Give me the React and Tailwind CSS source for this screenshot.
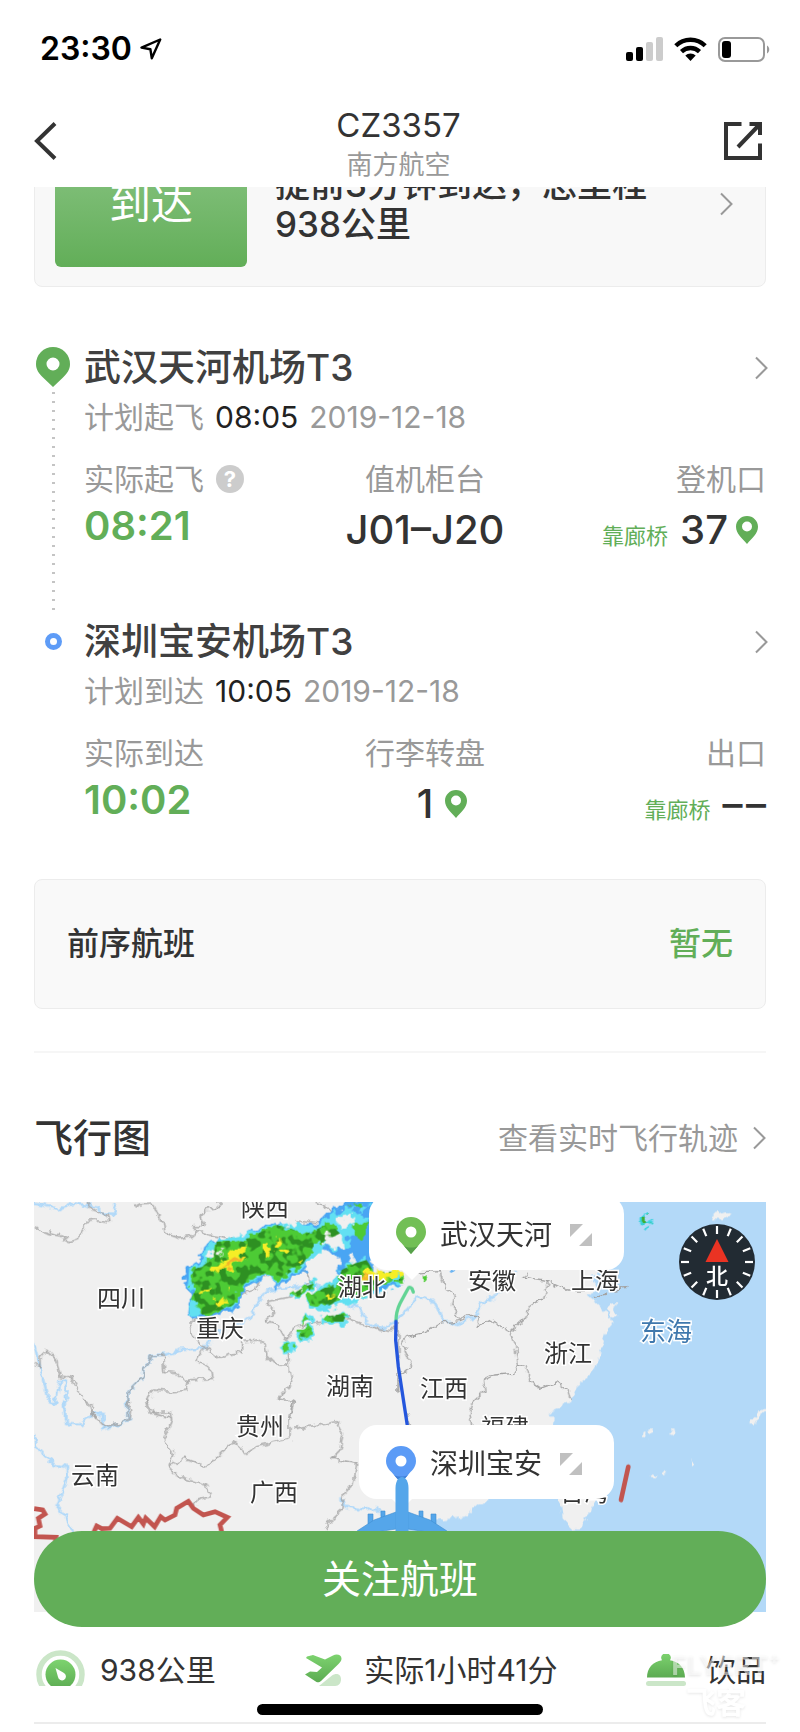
/**
 * Flight detail screen: status, departure / arrival timeline, flight map
 */

const FLIGHT = {
  number: 'CZ3357',
  airline: '南方航空',
  departure: {
    airport: '武汉天河机场T3',
    planLabel: '计划起飞',
    planTime: '08:05',
    date: '2019-12-18',
    actualLabel: '实际起飞',
    actualTime: '08:21',
    hasHelp: true,
    middleLabel: '值机柜台',
    middleValue: 'J01–J20',
    endLabel: '登机口',
    endValue: '37',
    endHasPin: true,
  },
  arrival: {
    airport: '深圳宝安机场T3',
    planLabel: '计划到达',
    planTime: '10:05',
    date: '2019-12-18',
    actualLabel: '实际到达',
    actualTime: '10:02',
    middleLabel: '行李转盘',
    middleValue: '1',
    middleHasPin: true,
    endLabel: '出口',
    endValue: '–\u200a–',
  },
};

const MAP_LABELS = [
  { name: '陕西', x: 231, y: 14 },
  { name: '四川', x: 87, y: 105 },
  { name: '重庆', x: 186, y: 135 },
  { name: '湖北', x: 328, y: 94 },
  { name: '湖南', x: 316, y: 193 },
  { name: '安徽', x: 458, y: 87 },
  { name: '上海', x: 561, y: 87 },
  { name: '浙江', x: 534, y: 160 },
  { name: '江西', x: 410, y: 195 },
  { name: '福建', x: 471, y: 234 },
  { name: '贵州', x: 226, y: 233 },
  { name: '云南', x: 61, y: 282 },
  { name: '广西', x: 240, y: 299 },
  { name: '台湾', x: 550, y: 299 },
];

const TICKS = Array.from({ length: 16 }, (_, i) => i * 22.5);

function Chevron({ className = 'text-[#999]' }) {
  return (
    <svg className={className} width="13" height="24" viewBox="0 0 13 24" fill="none" stroke="currentColor" strokeWidth="2">
      <path d="M1 1.500 11.500 12 1 22.500" />
    </svg>
  );
}

function SmallPin() {
  return (
    <svg width="22" height="28" viewBox="0 0 22 28" aria-hidden="true">
      <path
        fill="#62ae58"
        fillRule="evenodd"
        d="M11 0C4.900 0 0 4.800 0 10.700 0 17.500 6 22 11 28c5-6 11-10.500 11-17.300C22 4.800 17.100 0 11 0Zm0 5.500a5 5 0 1 1 0 10 5 5 0 0 1 0-10Z"
      />
    </svg>
  );
}

function StatusBar() {
  return (
    <div className="flex h-[98px] items-center justify-between pr-[30px] pl-10 text-black">
      <div className="flex items-center gap-2">
        <span className="text-[32px] leading-10 font-semibold">23:30</span>
        <svg width="22" height="22" viewBox="0 0 22 22" fill="none" stroke="currentColor" strokeWidth="2.400" strokeLinejoin="round">
          <path d="M20.200 1.500 1.500 9.600l8.900 1.700 1.400 8.900Z" />
        </svg>
      </div>
      <div className="flex items-center gap-[11px]">
        <svg width="37" height="24" viewBox="0 0 37 24">
          <rect x="0" y="15" width="7" height="9" rx="2" />
          <rect x="10" y="10" width="7" height="14" rx="2" />
          <rect x="20" y="5" width="7" height="19" rx="2" fill="#ccc" />
          <rect x="30" y="0" width="7" height="24" rx="2" fill="#ccc" />
        </svg>
        <svg width="33" height="24" viewBox="0 0 33 24" fill="none" stroke="currentColor" strokeWidth="4.400">
          <path d="M1.800 8.800a21 21 0 0 1 29.400 0" />
          <path d="M7.500 14.600a13 13 0 0 1 18 0" />
          <path d="M16.500 24 11.300 18.600a7.600 7.600 0 0 1 10.400 0Z" fill="currentColor" stroke="none" />
        </svg>
        <svg width="52" height="25" viewBox="0 0 52 25">
          <rect x="1" y="1" width="45" height="23" rx="6" fill="none" stroke="#999" strokeWidth="2" />
          <rect x="4" y="4" width="9" height="17" rx="3" />
          <path d="M49 8.500c3 1.500 3 6.500 0 8Z" fill="#999" />
        </svg>
      </div>
    </div>
  );
}

function Header() {
  return (
    <header className="sticky top-0 z-20 bg-white">
      <StatusBar />
      <div className="flex h-[89px] items-center justify-between pr-[37px] pb-1 pl-[34px] text-[#333]">
        <button type="button" aria-label="返回" className="flex w-10">
          <svg width="23" height="38" viewBox="0 0 23 38" fill="none" stroke="currentColor" strokeWidth="4">
            <path d="M21 1.500 3 19l18 17.500" />
          </svg>
        </button>
        <div className="pt-2 text-center">
          <h1 className="text-[33px] leading-10">{FLIGHT.number}</h1>
          <p className="text-[26px] leading-10 text-[#999]">{FLIGHT.airline}</p>
        </div>
        <button type="button" aria-label="分享" className="flex w-10 justify-end">
          <svg width="40" height="40" viewBox="0 0 40 40" fill="none" stroke="currentColor" strokeWidth="4">
            <path d="M18.500 3H3v34h34V22.500" />
            <path d="M26.500 3H37v11M37 3 15 26" />
          </svg>
        </button>
      </div>
    </header>
  );
}

function StatusCard() {
  return (
    <button
      type="button"
      className="-mt-[67px] flex w-full items-center rounded-lg border border-[#ececec] bg-[#f8f8f8] py-[19px] pr-8 pl-5 text-left"
    >
      <span className="flex h-[127px] w-48 items-center justify-center rounded-md bg-linear-to-b from-[#8bc585] to-[#62ae58] text-[42px] leading-[48px] text-white">
        到达
      </span>
      <span className="ml-7 w-[390px] text-[35px] leading-10 font-medium text-[#333]">提前3分钟到达，总里程938公里</span>
      <Chevron className="ml-auto text-[#999]" />
    </button>
  );
}

function AirportStop({ stop, first }) {
  return (
    <section className="flex">
      <div className="flex w-[50px] flex-col items-start pt-1">
        {first ? (
          <>
            <svg className="ml-0.5" width="34" height="40" viewBox="0 0 34 40">
              <path
                fill="#62ae58"
                fillRule="evenodd"
                d="M17 0a17 17 0 0 0-17 17c0 6 3 9.500 7 13.500L17 40l10-9.500c4-4 7-7.500 7-13.500A17 17 0 0 0 17 0Zm0 10.500a6.500 6.500 0 1 1 0 13 6.500 6.500 0 0 1 0-13Z"
              />
            </svg>
            <span className="mt-[5px] ml-[18px] w-[3px] flex-1 bg-[repeating-linear-gradient(#c4c4c4_0_2px,transparent_2px_9px)]" />
          </>
        ) : (
          <span className="mt-3 ml-[11px] size-[17px] rounded-full border-[5px] border-[#5e9cf7]" />
        )}
      </div>
      <div className={first ? 'flex-1 pb-[60px]' : 'flex-1'}>
        <a href="#airport" className="-mr-0.5 flex items-center justify-between">
          <h2 className="text-[37px] leading-[50px] font-medium text-[#404040]">{stop.airport}</h2>
          <Chevron />
        </a>
        <p className="mt-1 flex gap-[11px] text-[30px] leading-10 text-[#999]">
          {stop.planLabel}
          <span className="text-[#222]">{stop.planTime}</span>
          <span>{stop.date}</span>
        </p>
        <dl className="mt-[22px] grid grid-cols-3 text-[#333]">
          <div>
            <dt className="flex items-center gap-3 text-[30px] leading-10 text-[#999]">
              {stop.actualLabel}
              {stop.hasHelp && (
                <button
                  type="button"
                  aria-label="说明"
                  className="flex size-7 items-center justify-center rounded-full bg-[#ccc] text-[22px] font-bold text-white"
                >
                  ?
                </button>
              )}
            </dt>
            <dd className="mt-1 text-[40px] leading-[46px] font-semibold text-[#62ae58]">{stop.actualTime}</dd>
          </div>
          <div className="text-center">
            <dt className="text-[30px] leading-10 text-[#999]">{stop.middleLabel}</dt>
            <dd
              className={`mt-1 flex items-center justify-center gap-3 text-[40px] leading-[54px] font-medium ${stop.middleHasPin ? 'pl-[34px]' : ''}`}
            >
              {stop.middleValue}
              {stop.middleHasPin && <SmallPin />}
            </dd>
          </div>
          <div className="text-right">
            <dt className="text-[30px] leading-10 text-[#999]">{stop.endLabel}</dt>
            <dd className="mt-1 flex items-center justify-end gap-2 text-[40px] leading-[54px] font-medium">
              <span className="flex items-baseline gap-3">
                <span className="text-[22px] leading-6 font-normal text-[#62ae58]">靠廊桥</span>
                {stop.endValue}
              </span>
              {stop.endHasPin && (
                <span className="flex pr-2">
                  <SmallPin />
                </span>
              )}
            </dd>
          </div>
        </dl>
      </div>
    </section>
  );
}

function Borders() {
  return (
    <g fill="none" stroke="#a3a3a3" strokeWidth="4" strokeLinejoin="round" filter="url(#jagged)">
      <g transform="translate(-12 -6)">
        <path d="M12 80 25 92 60 100 90 108 120 122 150 112 165 85 165 65 200 60 240 66 235 45 190 30 170 6" />
        <path d="M310 8 330 18 370 15 385 50 400 60 405 100 450 115 480 110 500 92 540 105 610 118M500 92 490 80 525 80 510 50 525 28 565 22 568 6" />
        <path d="M860 6 900 30 920 80 800 62" />
        <path d="M12 490 30 500 30 470 50 450 80 480 90 530 125 535 150 580 180 625 200 660" />
        <path d="M510 345 480 370 485 400 520 440 545 455 570 475 600 460 635 455 635 425 680 420 705 430 710 465 740 495 775 495 785 550 745 595 790 600 780 660" />
        <path d="M520 445 500 480 545 510 550 535 475 540 470 570 430 575 370 570 350 600 370 640 425 655M400 465 405 515 440 518 475 545" />
        <path d="M295 660 295 575 340 530 340 505 360 490 365 465 405 465" />
        <path d="M510 345 640 280 680 265 690 225 820 212 840 235 830 265" />
        <path d="M785 290 710 305 735 335 710 360 740 375 760 410 775 420 790 385 840 370 900 365 950 355 990 370 1040 385 1080 392 1100 370M770 420 775 495" />
        <path d="M1104 370 1104 575" />
      </g>
      <g transform="translate(-12 594)">
        <path d="M165 0 190 20 185 40 215 70 225 82 300 60 305 30 295 0" />
        <path d="M350 0 358 40 420 35 425 60 400 120 430 160 415 200 460 175 530 200 610 125 650 160 680 140 740 125 780 115 780 60 790 0" />
        <path d="M790 85 870 75 920 65 940 100 930 150 905 175 980 190 970 250 940 285 935 330 885 375 890 395" />
        <path d="M415 200 440 225 480 240 530 255 540 290 500 300 495 315" />
      </g>
      <g transform="translate(1068 -6)">
        <path d="M60 220 150 215 160 250 190 290 185 320 205 350 210 362 250 345 268 350 255 380 300 360 360 395 405 355 425 310 460 300 475 245 405 235 410 212" />
        <path d="M475 245 530 270 590 270M610 290 650 282M670 270 715 265" />
        <path d="M210 362 150 370 110 395 50 410 35 430 50 460 65 500 40 520 28 530 25 575" />
        <path d="M360 395 375 430 380 460 385 495 405 500 420 545 450 565 500 548 535 575 540 595" />
        <path d="M385 495 375 520 310 525 280 540 285 570 250 605 240 640 245 680M52 640 62 680" />
      </g>
    </g>
  );
}

function Rivers() {
  return (
    <g fill="none" stroke="#b1d9f9" strokeWidth="8" strokeLinejoin="round" filter="url(#jagged)">
      <g transform="translate(-12 -6)">
        <path d="M12 10 90 28 130 10 200 20 215 40 260 42 245 8" />
        <path d="M12 430 30 500 50 580 75 615 90 540 110 545 105 660" />
        <path d="M295 660 295 575 340 530 340 505 360 490 365 465 405 465 450 450 520 445 560 400 620 375 660 350 700 280 740 265 850 255 960 315 990 325 1010 365 1060 385 1100 360 1125 340" />
      </g>
      <g transform="translate(-12 594)">
        <path d="M12 100 20 140 70 195 110 200 112 240 80 320 105 350 125 395M100 0 108 72 150 75 190 42 215 45 220 88 300 60 290 0M930 295 945 320 1000 330 1035 325 1090 370M55 0 75 15" />
      </g>
      <g transform="translate(1068 -6)">
        <path d="M20 355 50 330 85 290 130 300 165 365 210 372 255 350 275 310 330 280M375 212 370 230" />
      </g>
    </g>
  );
}

function Sea() {
  return (
    <g transform="translate(1068 -6)">
      <path
        filter="url(#jagged)"
        fill="#b3d9f8"
        d="M690-40 680 190 640 215 600 225 620 262 650 262 590 285 620 310 648 340 665 370 645 400 630 450 625 490 600 530 560 560 545 600 510 625 475 640 495 660 475 690 440 760 380 830 300 895 270 912 225 950 150 960 60 970 40 990-200 1020-200 1280 1180 1280V-40Z"
      />
      <g fill="#f0f0f0" filter="url(#jagged)">
        <path d="M505 890 515 950 560 995 575 995 580 960 605 935 612 900 640 850 600 840 540 850Z" />
        <path d="M968 55 975 42 1010 32 1025 42 1000 58Z" />
        <path d="m650 330 15-20 20 0-10 20 8 20-18 0ZM645 350l18 5-5 15-15-5Z" />
        <circle cx="763" cy="708" r="7" />
        <circle cx="780" cy="695" r="7" />
        <circle cx="846" cy="695" r="7" />
        <path d="m780 830 12-10 8 8-12 4ZM813 822l14-14 2 5-10 14ZM898 780l14 12-8 4Z" />
        <path d="m1135 612-30 25-22 18 4 25 8-22 18-15 22-18Z" />
      </g>
    </g>
  );
}

function Radar() {
  const main =
    'M490 210 530 190 550 170 560 125 640 120 740 75 830 100 900 70 930 100 850 140 820 190 740 245 710 215 635 255 620 310 560 335 510 345 495 300 485 260Z';
  const east =
    'M935 210 975 190 1010 180 1030 215 1110 215 1120 240 1040 255 1010 285 950 290 890 320 840 310 835 290 880 265 920 250Z';
  const cells =
    'M785 285 820 262 850 250 855 240 840 270 800 290ZM810 355 830 345 840 360 815 370ZM880 350 950 340 940 365 890 365ZM805 395 845 385 845 405 815 412ZM755 435 785 430 780 450 762 452Z';
  return (
    <g transform="translate(-12 -6)">
      <g filter="url(#cells)">
        <path
          fill="#4aa5f3"
          d="M470 200 510 175 515 150 560 115 610 120 640 105 690 85 740 65 780 80 850 70 900 40 950 5 1030 0 1030 220 920 225 925 170 880 145 850 170 820 215 740 262 715 225 640 270 630 325 570 345 500 360 475 335 490 290 465 250Z"
        />
        <path
          fill="#62e0f2"
          d="M478 205 515 180 520 155 560 118 690 92 740 70 850 80 950 20 1020 10 980 60 900 130 830 195 740 250 710 222 632 262 622 318 500 350 480 335 495 290 474 250ZM920 215 950 190 1000 170 1000 200ZM780 290 830 258 860 235 850 275 790 298ZM803 362 830 338 850 345 845 372ZM870 352 955 335 950 370 880 375ZM797 400 850 378 858 410 845 422 810 418ZM748 430 775 422 797 435 790 455 760 460Z"
        />
        <path fill="#4aa5f3" d="M940 80 1000 60 1020 130 960 160ZM960 25 1000 12 990 45Z" />
        <path fill="#62e0f2" d="M830 300 900 240 930 235 1110 225 1110 258 1020 290 890 330 835 325ZM900 60 960 40 1010 55 1000 100 960 140 905 150Z" />
        <path fill="#4aa5f3" d="M950 120 1020 90 1020 170 965 165ZM1020 268 1060 250 1120 250 1060 275Z" />
        <path fill="#4dcb35" d={main} />
        <path fill="#4dcb35" d={east} />
        <path fill="#4dcb35" d={cells} />
        <path fill="#4dcb35" d="M965 75 1010 65 1010 110 980 115ZM885 115 920 110 925 130 895 135ZM960 12 1000 15 990 30Z" />
        <path fill="#f0f0f0" d="M525 160 550 150 580 150 570 170 545 172ZM925 50 970 40 975 70 930 85ZM875 110 900 95 930 105 940 150 920 140 885 130ZM960 170 975 170 970 195 960 195Z" />
      </g>
      <g fill="#2e9022" filter="url(#speckle)">
        <path d={main} />
        <path d={east} />
        <path d={cells} />
      </g>
      <g filter="url(#cells)">
        <g fill="#f6ee26">
          <path d="M600 150 655 138 630 170 650 175 600 205 540 218 555 195 590 180ZM700 140 715 138 725 165 705 160ZM738 120 760 125 750 138 738 132ZM740 150 775 150 765 162 745 160ZM550 300 575 292 590 308 570 320ZM515 268 545 262 530 275ZM800 185 820 182 815 192ZM595 260 605 262 600 275Z" />
          <path d="M1000 215 1120 212 1100 235 1000 242ZM880 290 920 285 890 305Z" />
        </g>
        <path fill="#f4b52c" d="M605 180 640 172 625 188 570 208ZM990 232 1020 225 1015 240Z" />
      </g>
    </g>
  );
}

function Compass() {
  return (
    <g transform="translate(683 60)">
      <circle r="38" fill="#222b33" />
      {TICKS.map((deg) => (
        <path key={deg} d="M0-36V-28" stroke="#fff" strokeWidth="2.200" transform={`rotate(${deg})`} />
      ))}
      <path d="M0-23 11.500 0h-23Z" fill="#ea3323" />
      <text y="22" textAnchor="middle" fontSize="22" fontWeight="500" fill="#fff">
        北
      </text>
    </g>
  );
}

function MapCanvas() {
  return (
    <svg className="block h-[410px] w-full" viewBox="0 0 732 410" preserveAspectRatio="xMidYMid slice">
      <defs>
        <filter id="jagged" x="-5%" y="-5%" width="110%" height="110%">
          <feTurbulence type="fractalNoise" baseFrequency="0.045" numOctaves="2" seed="4" />
          <feDisplacementMap in="SourceGraphic" scale="26" xChannelSelector="R" yChannelSelector="G" />
        </filter>
        <filter id="cells" x="-10%" y="-10%" width="120%" height="120%">
          <feTurbulence type="fractalNoise" baseFrequency="0.04" numOctaves="2" seed="9" />
          <feDisplacementMap in="SourceGraphic" scale="44" xChannelSelector="R" yChannelSelector="G" />
        </filter>
        <filter id="speckle">
          <feTurbulence type="fractalNoise" baseFrequency="0.035" numOctaves="2" seed="12" />
          <feColorMatrix values="0 0 0 0 0  0 0 0 0 0  0 0 0 0 0  14 0 0 0 -7" />
          <feComposite in="SourceGraphic" operator="in" />
        </filter>
      </defs>
      <rect width="732" height="410" fill="#f0f0f0" />
      <g transform="scale(0.33333)">
        <Rivers />
        <Sea />
        <Borders />
        <Radar />
        <g transform="translate(1068 -6)" fill="none" strokeLinecap="round">
          <g filter="url(#cells)">
            <path d="M745 58 768 42 780 68 755 80Z" fill="#3ed3e0" />
            <path d="M756 58 772 52 774 68 760 70Z" fill="#3fae35" />
            <path d="M0 225 30 220 35 240 5 250Z" fill="#62e0f2" />
            <path d="M0 215 30 212 20 235 0 238Z" fill="#f6ee26" />
            <path d="M98 230 115 228 118 245 105 250Z" fill="#4dcb35" />
            <path d="M170 205 205 205 190 214Z" fill="#4aa5f3" />
          </g>
          <path d="M70 276 66 266Q58 258 54 266L30 310Q18 335 18 362" stroke="#62d494" strokeWidth="10" />
          <path d="M18 364 17 420 25 500 54 690" stroke="#2456dd" strokeWidth="10" />
          <path d="M715 800 693 900" stroke="#c2554f" strokeWidth="14" />
        </g>
        <g transform="translate(-12 594)" fill="none" stroke="#c2554f" strokeWidth="14">
          <path d="M192 395 200 378 215 386 240 385 262 355 305 380 325 352 340 372 347 354 374 380 392 350 405 360 435 345 440 325 475 304 490 325 520 345 555 335 592 352 570 375 575 395" />
          <path d="M12 326 38 330 45 342 25 355 30 378 15 385 15 410 78 412 76 425" />
        </g>
      </g>
      <g textAnchor="middle" fontSize="24" fill="#333" stroke="#fff" strokeWidth="3" paintOrder="stroke">
        {MAP_LABELS.map((label) => (
          <text key={label.name} x={label.x} y={label.y}>
            {label.name}
          </text>
        ))}
        <text x="632" y="139" fontSize="26" fill="#3f78ad">
          东海
        </text>
      </g>
      <Compass />
    </svg>
  );
}

function MapCallout({ name, pin, tip, className }) {
  return (
    <button
      type="button"
      className={`absolute flex h-[74px] w-[255px] items-center rounded-[18px] bg-white pt-1 pl-[27px] text-[28px] leading-10 text-[#333] ${className}`}
    >
      <svg width="30" height="37" viewBox="0 0 30 37">
        <path d="M15 0A15 15 0 0 0 0 15c0 7 5 10 8 14l7 8 7-8c3-4 8-7 8-14A15 15 0 0 0 15 0Z" fill={pin} />
        <path d="m8 29 7 8 7-8c-4 2-10 2-14 0Z" fill={tip} />
        <circle cx="15" cy="15" r="5.500" fill="#fff" />
      </svg>
      <span className="ml-3.5">{name}</span>
      <svg className="ml-[17px]" width="24" height="24" viewBox="0 0 24 24" fill="#c0c0c0">
        <path d="M1 1h13L1 14ZM23 10v13H10Z" />
      </svg>
      <svg className="absolute top-[73px] left-8" width="22" height="12" viewBox="0 0 22 12" fill="#fff">
        <path d="M0 0h22L11 11Z" />
      </svg>
    </button>
  );
}

function FlightMap() {
  return (
    <div className="relative mt-9 overflow-hidden">
      <MapCanvas />
      <MapCallout name="武汉天河" pin="#72bf56" tip="#57a04a" className="-top-1.5 left-[335px]" />
      <MapCallout name="深圳宝安" pin="#5b9bf6" tip="#3f7fd8" className="top-[223px] left-[325px]" />
      <svg className="absolute top-[272px] left-[322px]" width="92" height="70" viewBox="0 0 92 70" fill="#55a6ea" stroke="#3f8dd0" strokeWidth="0.600">
        <path d="M12 40h5v10h-5ZM25 37h4v9h-4ZM63 37h4v9h-4ZM75 40h5v10h-5Z" />
        <path d="M40 38 18 46 1 57v4l39-6ZM52 38l22 8 17 11v4l-39-6Z" />
        <path d="M39.500 70V14C39.500 8 42 3 46 3s6.500 5 6.500 11v56Z" stroke="none" />
      </svg>
    </div>
  );
}

function Summary() {
  return (
    <ul className="mt-[38px] flex h-9 items-start justify-between overflow-hidden text-[30px] leading-10 text-[#333]">
      <li className="flex gap-[15px]">
        <svg className="ml-0.5 shrink-0" width="49" height="49" viewBox="0 0 49 49">
          <defs>
            <linearGradient id="leaf" x1="0" y1="0" x2="0" y2="1">
              <stop offset="0" stopColor="#7dd36f" />
              <stop offset="1" stopColor="#5cab52" />
            </linearGradient>
          </defs>
          <circle cx="24.500" cy="24.500" r="21.500" fill="none" stroke="#cbe6c8" strokeWidth="5.500" />
          <circle cx="24.500" cy="24.500" r="15" fill="url(#leaf)" />
          <path d="m19.500 18 8.500 5a4 4 0 1 1-6 4Z" fill="#fff" />
        </svg>
        938公里
      </li>
      <li className="flex gap-[22px]">
        <svg className="mt-1 shrink-0" width="38" height="32" viewBox="0 0 38 32">
          <path d="M15 32 28 21.500c4-3 9-1.500 9 3.500 0 4-2 7-6 7Z" fill="#cbe6c8" />
          <path
            d="M3 2.500 9 1l12 4.500 8-4c4-2 8.500-.5 8.500 3 0 2-1 3.500-3 5.500L17 27c-1.500 1.500-3 1.500-4.500 1L1 20.500l5-3 7 .5 5-4.500L2 4Z"
            fill="url(#leaf)"
          />
        </svg>
        实际1小时41分
      </li>
      <li className="flex gap-5">
        <svg className="mt-1 shrink-0" width="40" height="32" viewBox="0 0 40 32">
          <path d="M1 23.500C1 14 7 7.500 16 6.200a4.700 4.700 0 1 1 8 0C33 7.500 39 14 39 23.500Z" fill="url(#leaf)" />
          <rect x="0" y="27" width="40" height="5" rx="2.500" fill="#cbe6c8" />
        </svg>
        饮品
      </li>
    </ul>
  );
}

export default function App() {
  return (
    <div lang="zh-CN" className="min-h-screen bg-white font-['Inter','Noto_Sans_CJK_SC',sans-serif]">
      <Header />

      <main className="px-[34px] pb-[7px]">
        <StatusCard />

        <div className="mt-14">
          <AirportStop stop={FLIGHT.departure} first />
          <AirportStop stop={FLIGHT.arrival} />
        </div>

        <section className="mt-12 flex h-[130px] items-center justify-between rounded-lg border border-[#ececec] bg-[#f9f9f9] px-8 text-[32px] leading-10">
          <h2 className="font-medium text-[#333]">前序航班</h2>
          <span className="font-medium text-[#62ae58]">暂无</span>
        </section>

        <section className="mt-[42px] border-t-2 border-[#f6f6f6] pt-[57px]">
          <div className="flex h-14 items-center justify-between">
            <h2 className="text-[39px] leading-[48px] font-medium text-[#333]">飞行图</h2>
            <a href="#track" className="flex items-center gap-[15px] text-[30px] leading-10 text-[#999]">
              查看实时飞行轨迹
              <Chevron />
            </a>
          </div>
          <FlightMap />
        </section>

        <Summary />
        <hr className="mt-9 border-t-2 border-[#ececec]" />
      </main>

      <button
        type="button"
        className="fixed inset-x-[34px] bottom-[105px] h-24 rounded-full bg-[#62ae58] text-[39px] leading-[48px] text-white"
      >
        关注航班
      </button>

      <div className="pointer-events-none fixed right-2.5 bottom-2.5 w-32 text-center font-bold text-white/50 [text-shadow:0_1px_3px_rgba(0,0,0,0.1)]">
        <p className="text-[26px] leading-8">FLYERT⁺</p>
        <p className="pr-5 text-[30px] leading-10 text-white">飞客</p>
      </div>

      <div className="fixed inset-x-0 bottom-[17px] mx-auto h-[11px] w-[286px] rounded-full bg-black" />
    </div>
  );
}
